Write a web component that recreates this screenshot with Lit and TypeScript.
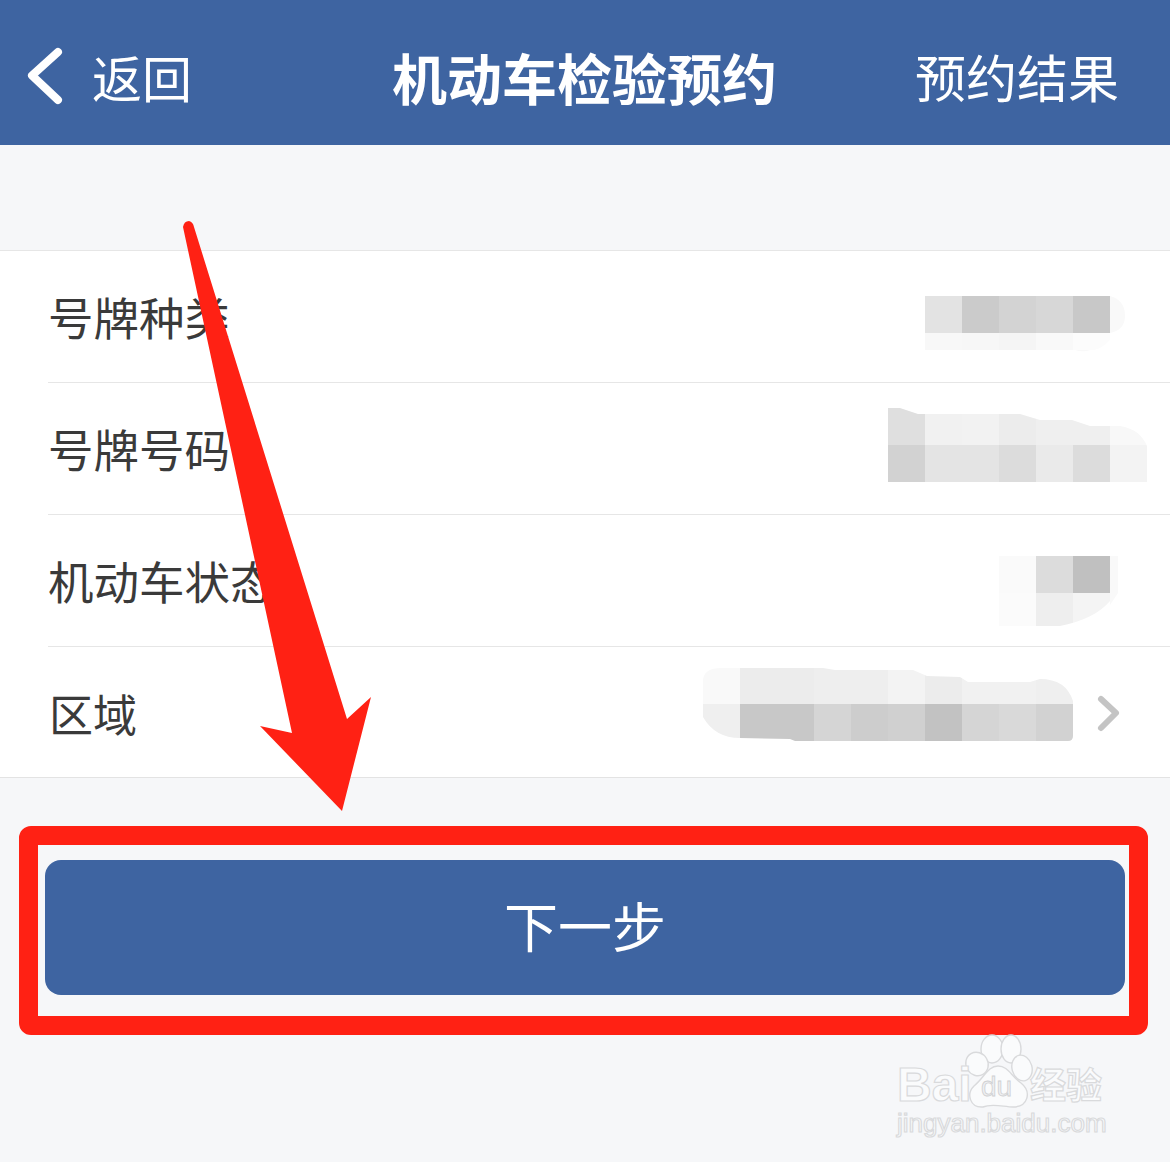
import { LitElement, html, css, svg } from "lit";
import { customElement } from "lit/decorators.js";

type Cell = [number, number, number, number, string];
interface Mosaic { x0: number; x1: number; top: number; gap: number; clip: string; cells: Cell[]; fringe: string[] }

const grey = (v: number) => `rgb(${v},${v},${v})`;
const cols = (x0: number, y0: number, yMid: number, yEnd: number, upper: number[], lower: number[]): Cell[] => {
  const out: Cell[] = [];
  upper.forEach((v, i) => out.push([x0 + i * 37, y0, 37, yMid - y0, grey(v)]));
  lower.forEach((v, i) => out.push([x0 + i * 37, yMid, 37, yEnd - yMid, grey(v)]));
  return out;
};

const MOSAICS: Mosaic[] = [
  { x0: 915, x1: 1130, top: 251, gap: 40,
    clip: "M925 296 H1110 V333 H1110 L1110 340 Q1100 352 1085 350 H925 Z",
    fringe: ["M1110 296 Q1125 300 1125 316 Q1125 330 1110 333 Z", "M1075 350 Q1095 356 1110 333 L1095 333 Z"],
    cells: cols(925, 296, 333, 350, [227, 203, 211, 215, 200], [248, 247, 245, 249, 252]) },
  { x0: 880, x1: 1150, top: 382, gap: 20,
    clip: "M888 407 L900 407 L918 413 L1020 413 L1040 419 L1072 419 L1090 425 L1120 425 Q1140 428 1147 445 L1147 481 L888 481 Z",
    fringe: [],
    cells: cols(888, 407, 444, 481, [223, 241, 242, 236, 239, 239, 248], [210, 228, 228, 220, 234, 220, 243]) },
  { x0: 990, x1: 1125, top: 514, gap: 45,
    clip: "M999 555 H1110 V600 Q1095 618 1060 625 H999 Z",
    fringe: ["M1110 555 L1118 555 L1118 592 L1110 604 Z"],
    cells: cols(999, 555, 592, 625, [250, 220, 192], [251, 238, 244]) },
  { x0: 695, x1: 1073, top: 646, gap: 0,
    clip: "M703 680 Q703 667 722 667 L823 667 L835 669 L913 669 L927 675 L960 676 L968 681 L1030 681 L1040 678 Q1066 678 1073 700 L1073 735 Q1073 740 1068 740 L795 740 L790 738 L740 737 Q715 737 703 716 Z",
    fringe: [],
    cells: cols(703, 667, 703, 740, [249, 236, 236, 238, 238, 243, 236, 241, 241, 239], [239, 200, 200, 213, 205, 208, 194, 213, 217, 210]) },
];

@customElement("app-root")
export class AppRoot extends LitElement {
  static styles = css`
    :host { display: block; position: relative; width: 1170px; height: 1162px; overflow: hidden; background: #f6f7f9; font-family: "Noto Sans CJK SC", "Noto Sans", sans-serif; }
    .header { height: 145px; box-sizing: border-box; padding-top: 6px; background: #3e64a1; color: #fff; display: grid; grid-template-columns: 1fr auto 1fr; align-items: center; }
    .back { display: flex; align-items: center; font-size: 50px; padding-left: 26px; gap: 26px; }
    .back svg { display: block; margin-top: -1px; }
    .title { font-size: 55px; font-weight: 700; margin-left: -1px; }
    .result { font-size: 51px; text-align: right; padding-right: 51px; }
    .list { margin-top: 105px; background: #fff; border-top: 1px solid #e6e6e6; border-bottom: 1px solid #e3e3e3; height: 526px; display: flex; flex-direction: column; }
    .row { flex: 0 0 132px; box-sizing: border-box; margin-left: 48px; border-bottom: 1px solid #e6e6e6; display: flex; align-items: center; font-size: 45.5px; color: #3a3a3a; }
    .row:first-child { flex-basis: 131px; }
    .row:last-child { flex-basis: 131px; border-bottom: 0; }
    .label { line-height: 1; }
    .label.short { padding-left: 1px; font-size: 44px; }
    .mosaic { margin-left: auto; display: block; flex: none; height: 131px; align-self: flex-start; }
    .chev { display: block; flex: none; margin: 0 48px 0 23px; }
    .frame { margin: 48px 22px 0 19px; height: 209px; box-sizing: border-box; border: 19px solid #ff2114; border-radius: 12px; padding: 15px 4px 21px 7px; }
    .next { height: 135px; box-sizing: border-box; padding-bottom: 6px; background: #3e64a1; color: #fff; border-radius: 16px; font-size: 54px; display: flex; align-items: center; justify-content: center; }
    .overlay { position: absolute; inset: 0; pointer-events: none; display: block; }
    .wm text { font-family: "Liberation Sans", sans-serif; fill: #fafbfc; stroke: #d9dadc; stroke-width: 1.2px; }
    .wm .cn { font-family: "Noto Sans CJK SC", sans-serif; font-weight: 700; }
    .wm .du { fill: #eeeff1; stroke: #cfd0d2; stroke-width: 0.8px; }
  `;

  private mosaic(m: Mosaic, i: number) {
    const w = m.x1 - m.x0;
    return html`<svg class="mosaic" style="width:${w}px;margin-right:${m.gap}px" viewBox="${m.x0} ${m.top} ${w} 131">
      <defs><clipPath id="m${i}"><path d=${m.clip}></path></clipPath></defs>
      ${m.fringe.map((d) => svg`<path d=${d} fill="#f9f9f9"></path>`)}
      <g clip-path="url(#m${i})">
        ${m.cells.map(([x, y, cw, h, c]) => svg`<rect x=${x} y=${y} width=${cw} height=${h} fill=${c}></rect>`)}
      </g>
    </svg>`;
  }

  render() {
    return html`
      <div class="header">
        <div class="back">
          <svg width="40" height="64" viewBox="26 46 40 64"><path d="M58 55 L32 78.5 L58 103" fill="none" stroke="#fff" stroke-width="8" stroke-linecap="round" stroke-linejoin="round"></path></svg>
          <span>返回</span>
        </div>
        <div class="title">机动车检验预约</div>
        <div class="result">预约结果</div>
      </div>
      <div class="list">
        <div class="row"><span class="label">号牌种类</span>${this.mosaic(MOSAICS[0], 0)}</div>
        <div class="row"><span class="label">号牌号码</span>${this.mosaic(MOSAICS[1], 1)}</div>
        <div class="row"><span class="label">机动车状态</span>${this.mosaic(MOSAICS[2], 2)}</div>
        <div class="row"><span class="label short">区域</span>${this.mosaic(MOSAICS[3], 3)}
          <svg class="chev" width="26" height="40" viewBox="1097 692 26 40"><path d="M1102 698 L1117 712 L1102 727" fill="none" stroke="#c4c4c4" stroke-width="6" stroke-linecap="round" stroke-linejoin="round"></path></svg>
        </div>
      </div>
      <div class="frame"><div class="next">下一步</div></div>

      <svg class="overlay wm" viewBox="0 0 1170 1162">
        <g fill="#fafbfc" stroke="#d9dadc" stroke-width="1.4">
          <ellipse cx="992" cy="1049" rx="11" ry="14"></ellipse>
          <ellipse cx="1011" cy="1049" rx="10" ry="14"></ellipse>
          <ellipse cx="977" cy="1064" rx="11" ry="12" transform="rotate(-30 977 1064)"></ellipse>
          <ellipse cx="1022" cy="1068" rx="10" ry="13" transform="rotate(-15 1022 1068)"></ellipse>
          <path d="M998 1066 C1008 1066 1011 1076 1021 1083 C1032 1092 1028 1107 1013 1107 C1004 1107 992 1103 983 1107 C970 1108 966 1094 974 1086 C984 1078 988 1066 998 1066 Z"></path>
        </g>
        <text x="897" y="1101" font-size="48" font-weight="700">Bai</text>
        <text class="du" x="981" y="1096" font-size="28">du</text>
        <text class="cn" x="1030" y="1099" font-size="36">经验</text>
        <text x="897" y="1132" font-size="26">jingyan.baidu.com</text>
      </svg>

      <svg class="overlay" viewBox="0 0 1170 1162">
        <path d="M183 227 Q184 221 189 221 Q193 222 194 227 L347 719 L371 697 L342 811 L260 726 L292 733 Z" fill="#ff2114"></path>
      </svg>
    `;
  }
}
